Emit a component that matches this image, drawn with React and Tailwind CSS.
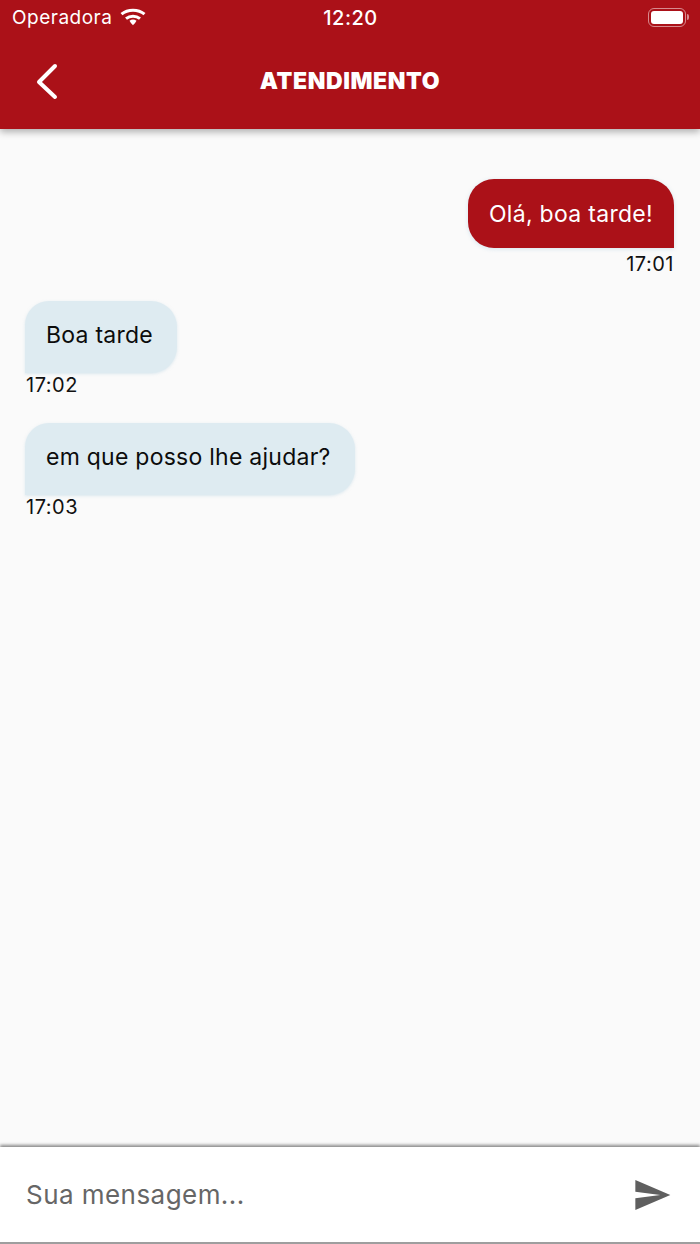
const font = { fontFamily: "Inter, 'Liberation Sans', sans-serif" };

function Bubble({ text, time, mine }) {
  return (
    <div className={mine ? "flex flex-col items-end" : "flex flex-col items-start"}>
      <div
        className={
          mine
            ? "h-[69px] flex items-center px-[21px] pt-[1px] text-[23px] tracking-[0.3px] text-white bg-[#ab1118] rounded-tl-[26px] rounded-tr-[26px] rounded-bl-[26px] shadow-[0_1px_4px_rgba(170,205,225,0.45)]"
            : "h-[72px] flex items-center pl-[21px] pr-[24px] pb-[3px] text-[23px] tracking-[0.25px] text-[#0c0c0c] bg-[#deebf1] rounded-tl-[24px] rounded-tr-[26px] rounded-br-[26px] shadow-[0_1px_3px_rgba(190,215,230,0.5)]"
        }
      >
        {text}
      </div>
      <div className={"text-[20px] tracking-[0.5px] leading-[24px] text-[#111] " + (mine ? "pt-[4px] box-content" : "pl-px pb-px box-content")}>{time}</div>
    </div>
  );
}

export default function App() {
  return (
    <div style={font} className="w-[700px] h-[1244px] flex flex-col bg-[#fafafa] overflow-hidden">
      <header className="relative z-10 h-[129px] shrink-0 bg-[#ab1118] text-white shadow-[0_3px_7px_rgba(0,0,0,0.3)]">
        <div className="h-[36px] px-3 flex items-center justify-between">
          <div className="flex items-center gap-2 w-[200px]">
            <span className="text-[19px] tracking-[0.5px]">Operadora</span>
            <svg width="26" height="19" viewBox="0 0 26 19" fill="none" stroke="white" strokeWidth="3" className="-mt-[4px]">
              <path d="M1.5 7.2 C7.8 1.8 18.2 1.8 24.5 7.2" />
              <path d="M6 11.6 C10 8.3 16 8.3 20 11.6" />
              <path d="M10.3 15 C12 13.9 14 13.9 15.7 15" />
              <path d="M13 18.2 l-2.2 -2.4 a3 3 0 0 1 4.4 0 z" fill="white" stroke="none" />
            </svg>
          </div>
          <span className="text-[20px] tracking-[0.5px] font-medium">12:20</span>
          <div className="w-[200px] flex justify-end items-center -mr-[1px] -mt-[2px]">
            <div className="w-[38px] h-[19px] rounded-[6px] border-[1.5px] border-[#d88a8e] p-[2px]">
              <div className="w-full h-full bg-white rounded-[3px]" />
            </div>
            <div className="w-[2px] h-[6px] ml-[1px] rounded-r bg-[#d88a8e]" />
          </div>
        </div>
        <div className="relative h-[92px] flex items-center justify-center">
          <svg width="24" height="38" viewBox="0 0 24 38" fill="none" stroke="white" strokeWidth="4" strokeLinecap="round" strokeLinejoin="round" className="absolute left-[35px] top-[27px]">
            <path d="M20 3 L4 19 L20 34" />
          </svg>
          <h1 className="text-[23px] font-black tracking-[0.6px] leading-none -mt-[1px]">ATENDIMENTO</h1>
        </div>
      </header>

      <main className="flex-1 flex flex-col pl-[25px] pr-[26px] pt-[50px] gap-[25px]">
        <Bubble mine text="Olá, boa tarde!" time="17:01" />
        <Bubble text="Boa tarde" time="17:02" />
        <Bubble text="em que posso lhe ajudar?" time="17:03" />
      </main>

      <footer className="relative h-[97px] shrink-0 bg-white flex items-center justify-between pl-[26px] pr-[28px] border-b-2 border-[#9e9e9e] shadow-[0_-2px_3px_rgba(0,0,0,0.45)]">
        <span className="text-[26px] tracking-[0.45px] text-[#666]">Sua mensagem...</span>
        <svg width="40" height="40" viewBox="0 0 24 24" fill="#5f5f5f">
          <path d="M2.01 21L23 12 2.01 3 2 10l15 2-15 2z" />
        </svg>
      </footer>
    </div>
  );
}
